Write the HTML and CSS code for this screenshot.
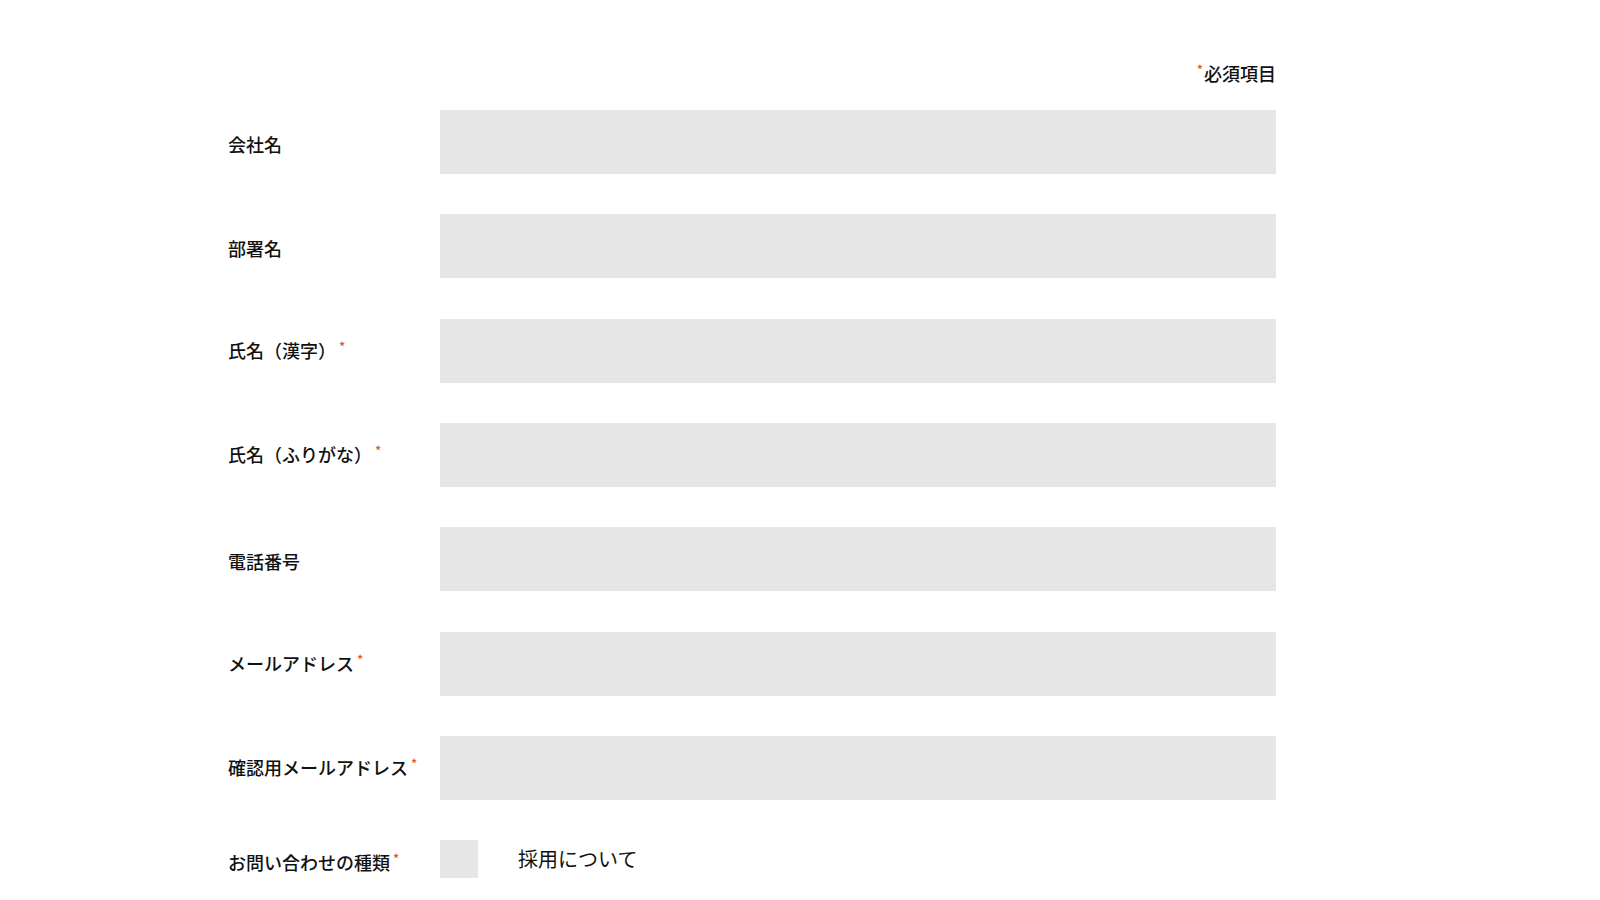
FILE: index.html
```html
<!DOCTYPE html>
<html lang="ja">
<head>
    <meta charset="UTF-8">
    <title>お問い合わせ</title>
    <link rel="stylesheet" href="styles.css">
</head>
<body>
    <form class="contact-form">
        <p class="required-note"><span class="req">*</span>必須項目</p>

        <div class="form-row">
            <label class="form-label plain" for="company">会社名</label>
            <input class="form-input" type="text" id="company">
        </div>
        <div class="form-row">
            <label class="form-label plain" for="department">部署名</label>
            <input class="form-input" type="text" id="department">
        </div>
        <div class="form-row">
            <label class="form-label" for="name">氏名（漢字）<span class="req">*</span></label>
            <input class="form-input" type="text" id="name">
        </div>
        <div class="form-row">
            <label class="form-label" for="kana">氏名（ふりがな）<span class="req">*</span></label>
            <input class="form-input" type="text" id="kana">
        </div>
        <div class="form-row">
            <label class="form-label plain" for="tel">電話番号</label>
            <input class="form-input" type="tel" id="tel">
        </div>
        <div class="form-row">
            <label class="form-label" for="email">メールアドレス<span class="req">*</span></label>
            <input class="form-input" type="email" id="email">
        </div>
        <div class="form-row">
            <label class="form-label" for="email2">確認用メールアドレス<span class="req">*</span></label>
            <input class="form-input" type="email" id="email2">
        </div>
        <div class="form-row">
            <span class="form-label choice-label">お問い合わせの種類<span class="req">*</span></span>
            <label class="option">
                <input class="option-box" type="checkbox" name="kind" value="recruit">
                <span class="option-text">採用について</span>
            </label>
        </div>
    </form>
</body>
</html>
```

FILE: styles.css
```css
body {
    margin: 0;
    padding: 0;
    background: #fff;
    color: #111;
    font-family: "Noto Sans CJK JP", "Noto Sans", sans-serif;
}
.contact-form {
    width: 1048px;
    margin: 0 0 0 228px;
    padding-top: 60px;
}
.required-note {
    margin: 0 0 24px;
    text-align: right;
    font-size: 18px;
    line-height: 26px;
    font-weight: 500;
}
/* little orange star after required labels */
.req {
    color: #e0561e;
    font-size: 13px;
    line-height: 1;
    vertical-align: 6px;
    margin-left: 3px;
}
.required-note .req {
    margin-left: 0;
    margin-right: 1px;
}
.form-row {
    display: flex;
    align-items: center;
    margin-bottom: 40.33px;
}
.form-label {
    width: 212px;
    flex-shrink: 0;
    font-size: 18px;
    line-height: 26px;
    font-weight: 500;
    margin-top: -2px;
}
.form-label.plain {
    margin-top: 0;
    padding-top: 4px;
}
.form-label.choice-label {
    margin-top: 0;
    padding-top: 6px;
}
.form-input {
    flex: 1;
    height: 64px;
    margin: 0;
    padding: 0 16px;
    border: none;
    border-radius: 0;
    background: #e6e6e6;
    font-size: 17px;
    box-sizing: border-box;
}
.option {
    display: flex;
    align-items: center;
    gap: 40px;
    cursor: pointer;
}
.option-box {
    appearance: none;
    -webkit-appearance: none;
    width: 38px;
    height: 38px;
    margin: 0;
    background: #e6e6e6;
    border: none;
}
.option-text {
    font-size: 20px;
    line-height: 30px;
}
```
